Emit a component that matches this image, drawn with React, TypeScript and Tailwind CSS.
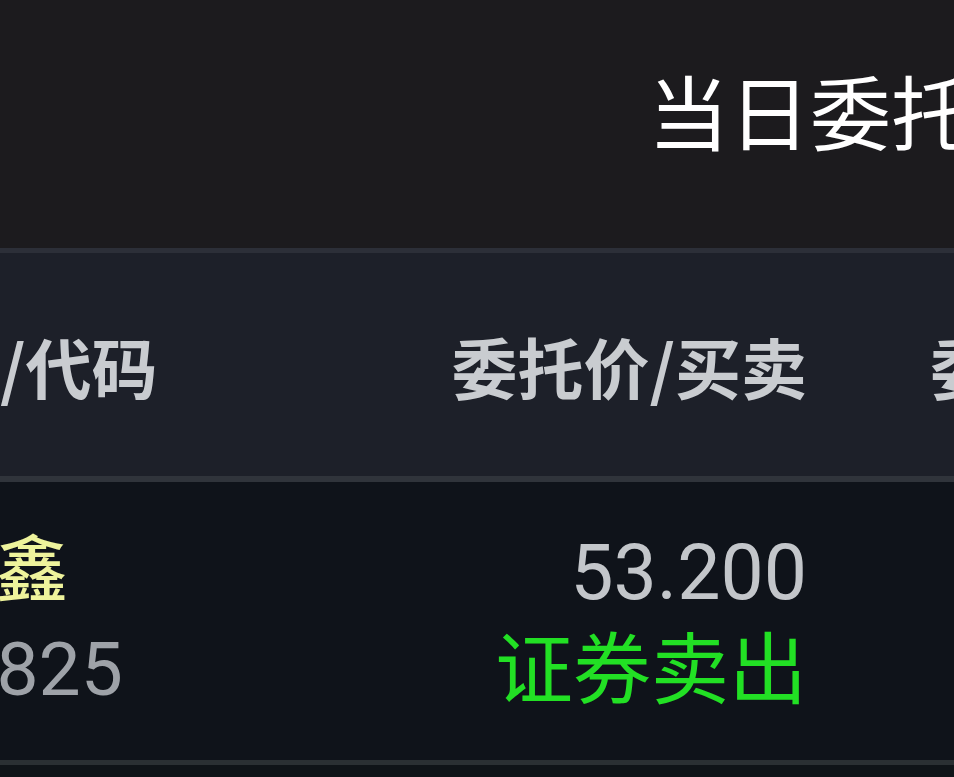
import React from 'react';

const cjk = { fontFamily: '"Noto Sans CJK SC", "Noto Sans", sans-serif' };
const num = { fontFamily: 'Roboto, "Noto Sans CJK SC", sans-serif' };

const orders = [
  { name: '华鑫鑫', code: '603825', price: '53.200', side: '证券卖出', qty: '100' },
];

export default function App() {
  return (
    <div className="w-[954px] h-[777px] overflow-hidden bg-[#0f1418]" style={cjk}>
      {/* top bar */}
      <div className="h-[248px] bg-[#1c1b1e] flex items-center pl-[648px]">
        <h1 className="text-[81px] leading-none text-white whitespace-nowrap -mt-[32px]">当日委托</h1>
      </div>
      <div className="h-[5px] bg-[#2c2f38]" />

      {/* column headers */}
      <div className="h-[223px] bg-[#1d2029] flex items-center overflow-hidden">
        <div className="grid grid-cols-[437px_375px_400px] gap-x-[125px] -ml-[130px] shrink-0 font-bold text-[66px] leading-none text-[#c9ccd0] whitespace-nowrap">
          <span className="-ml-[2px]">名称/代码</span>
          <span className="text-right">委托价/买卖</span>
          <span className="-ml-[2px]">委托数量</span>
        </div>
      </div>
      <div className="h-[6px] bg-[#30343b]" />

      {/* order rows */}
      {orders.map((o, i) => (
        <div key={i}>
          <div className="h-[278px] bg-[#0f131a] flex items-center overflow-hidden">
            <div className="grid grid-cols-[437px_375px_400px] gap-x-[125px] -ml-[130px] shrink-0 whitespace-nowrap">
              <div className="flex flex-col">
                <span className="text-[72px] font-medium leading-[90px] mt-[-4px] mb-[10px] -ml-[18px] text-[#eef39c]">{o.name}</span>
                <span className="text-[75px] leading-[100px] text-[#9ea2a8]" style={num}>{o.code}</span>
              </div>
              <div className="flex flex-col items-end">
                <span className="text-[77px] leading-[100px] text-[#c3c6ca]" style={num}>{o.price}</span>
                <span className="text-[78px] leading-[82px] text-[#22e024]">{o.side}</span>
              </div>
              <div className="flex flex-col items-end">
                <span className="text-[77px] leading-[100px] text-[#c3c6ca]" style={num}>{o.qty}</span>
              </div>
            </div>
          </div>
          <div className="h-[5px] bg-[#2a3033]" />
        </div>
      ))}
    </div>
  );
}
